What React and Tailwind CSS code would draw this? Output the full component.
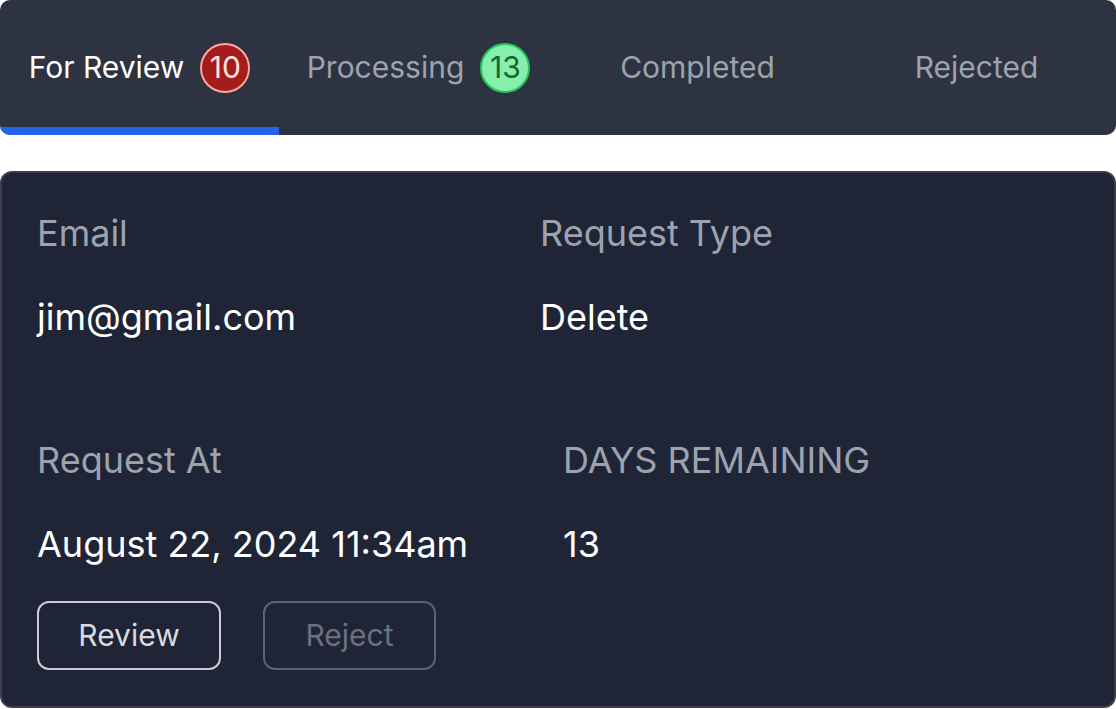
export default function App() {
  return (
    <div className="w-[1116px] h-[709px] bg-white font-['Inter',sans-serif]">
      {/* tabs start */}
      <nav className="grid grid-cols-4 h-[135px] bg-[#2d3340] rounded-[10px] overflow-hidden">
        <Tab label="For Review" active badge="10" tone="red" />
        <Tab label="Processing" badge="13" tone="green" />
        <Tab label="Completed" />
        <Tab label="Rejected" />
      </nav>
      {/* tabs end */}

      {/* request card start */}
      <section className="mt-[36px] h-[537px] bg-[#1f2536] border-2 border-[#3a3f4b] rounded-[12px] px-[35px] pt-[38px]">
        <div className="flex">
          <Field className="w-[503px]" label="Email" value="jim@gmail.com" />
          <Field label="Request Type" value="Delete" />
        </div>
        <div className="flex mt-[99px]">
          <Field className="w-[526px]" label="Request At" value="August 22, 2024 11:34am" />
          <Field label="DAYS REMAINING" value="13" />
        </div>
        <div className="flex gap-[42px] mt-[35px]">
          <button className="w-[184px] h-[69px] rounded-[12px] border-2 border-[#c9ccd3] text-[30px] text-[#d8dbe0]">
            Review
          </button>
          <button className="w-[173px] h-[69px] rounded-[12px] border-2 border-[#5d6270] text-[30px] text-[#6b7080]">
            Reject
          </button>
        </div>
      </section>
      {/* request card end */}
    </div>
  );
}

function Tab({ label, active, badge, tone }) {
  return (
    <button
      className={
        "relative flex items-center justify-center gap-4 text-[30px] " +
        (active ? "text-white" : "text-[#9ca3af]")
      }
    >
      {label}
      {badge && (
        <span
          className={
            "w-[50px] h-[50px] shrink-0 rounded-full border-2 flex items-center justify-center text-[30px] " +
            (tone === "red"
              ? "bg-[#a51c1c] border-[#fca5a5] text-[#fde2e2]"
              : "bg-[#86efac] border-[#22c55e] text-[#166534]")
          }
        >
          {badge}
        </span>
      )}
      {active && <span className="absolute left-0 right-0 bottom-0 h-[8px] bg-[#2563eb]" />}
    </button>
  );
}

function Field({ label, value, className = "" }) {
  return (
    <div className={className}>
      <p className="text-[36px] leading-[44px] text-[#9ca3af]">{label}</p>
      <p className="mt-[40px] text-[36px] leading-[44px] text-white">{value}</p>
    </div>
  );
}
